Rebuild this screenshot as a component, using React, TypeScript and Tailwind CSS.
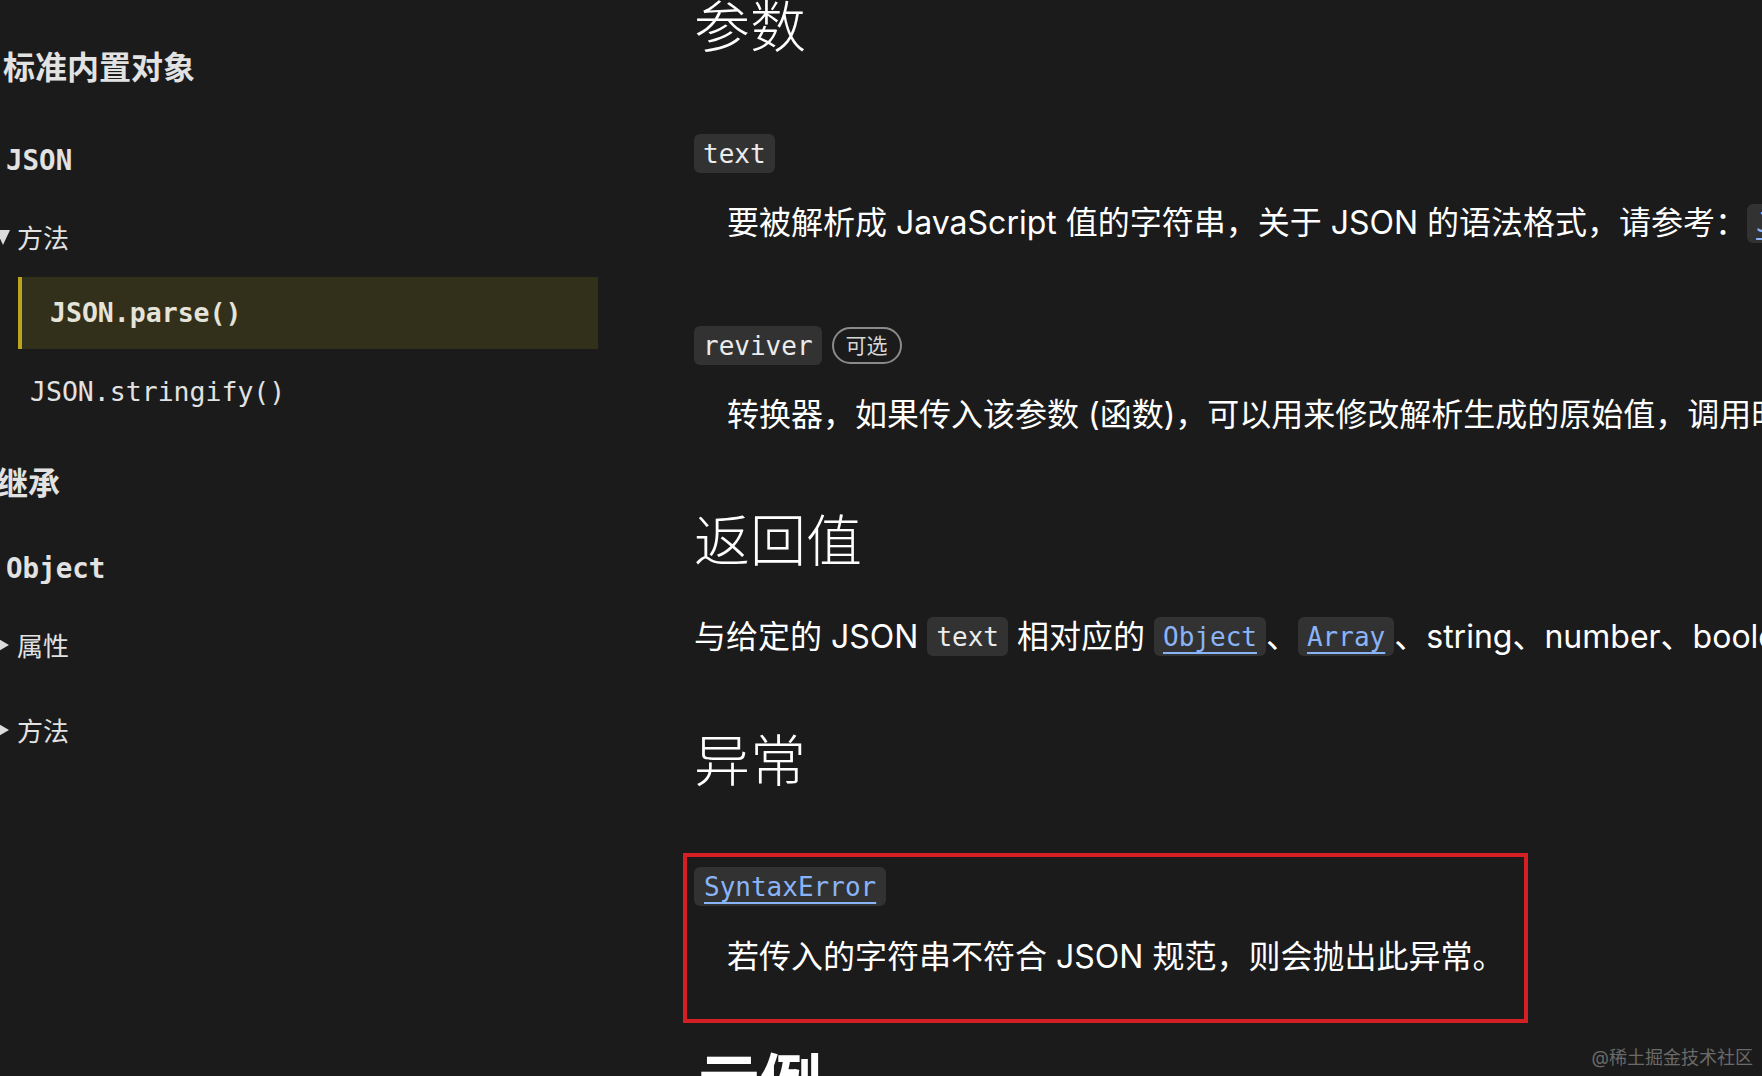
import React from "react";

const mono = { fontFamily: '"DejaVu Sans Mono", "Liberation Mono", monospace' };

function DownTri() {
  return (
    <svg width="14" height="15" viewBox="0 0 14 15" className="-ml-[4px] mr-[7px] shrink-0">
      <polygon points="0,0 14,0 7,15" fill="#dcdcdc" />
    </svg>
  );
}
function RightTri() {
  return (
    <svg width="12" height="14" viewBox="0 0 12 14" className="-ml-[3px] mr-[8px] shrink-0">
      <polygon points="0,0 12,7 0,14" fill="#dcdcdc" />
    </svg>
  );
}

function Code({ children, link = false, className = "" }: { children: React.ReactNode; link?: boolean; className?: string }) {
  return (
    <span
      className={
        "inline-flex items-center h-[39px] px-[9px] rounded-[6px] bg-[#323232] text-[26px] leading-none align-middle shrink-0 " +
        (link ? "text-[#8ab4f8] underline decoration-[2px] underline-offset-[6px] " : "text-[#ececec] ") +
        className
      }
      style={mono}
    >
      {children}
    </span>
  );
}

export default function App() {
  return (
    <div
      className="relative w-[1762px] h-[1076px] overflow-hidden bg-[#1b1b1b] flex"
      style={{ fontFamily: '"Inter", "Noto Sans CJK SC", sans-serif' }}
    >
      {/* Sidebar */}
      <div
        className="w-[694px] shrink-0 flex flex-col pt-[40px] text-[#e2e2e2]"
        style={{ fontFamily: '"Noto Sans CJK SC", sans-serif' }}
      >
        <div className="shrink-0 h-[50px] flex items-center pl-[3px] text-[32px] font-bold leading-none">标准内置对象</div>
        <div className="shrink-0 mt-[46px] h-[50px] flex items-center pl-[6px] text-[27.5px] font-bold leading-none" style={mono}>
          JSON
        </div>
        <div className="shrink-0 mt-[26px] h-[50px] flex items-center text-[26px] leading-none">
          <DownTri />
          方法
        </div>
        <div className="shrink-0 mt-[15px] ml-[18px] w-[580px] h-[72px] flex items-center pl-[28px] bg-[#32301b] border-l-[4px] border-[#bba51c]">
          <span className="text-[26.5px] font-bold leading-none text-[#e6e4d8]" style={mono}>
            JSON.parse()
          </span>
        </div>
        <div className="shrink-0 mt-[18px] h-[50px] flex items-center pl-[30px] text-[26.5px] leading-none" style={mono}>
          JSON.stringify()
        </div>
        <div className="shrink-0 mt-[39px] h-[50px] flex items-center -ml-[4px] text-[32px] font-bold leading-none">继承</div>
        <div className="shrink-0 mt-[38px] h-[50px] flex items-center pl-[6px] text-[27.5px] font-bold leading-none" style={mono}>
          Object
        </div>
        <div className="shrink-0 mt-[26px] h-[50px] flex items-center text-[26px] leading-none">
          <RightTri />
          属性
        </div>
        <div className="shrink-0 mt-[35px] h-[50px] flex items-center text-[26px] leading-none">
          <RightTri />
          方法
        </div>
      </div>

      {/* Content */}
      <div className="flex-1 min-w-0 flex flex-col text-white whitespace-nowrap">
        <div className="shrink-0 -mt-[1px] h-[56px] flex items-center text-[56px] font-light leading-none">参数</div>

        <div className="shrink-0 mt-[79px] flex">
          <Code>text</Code>
        </div>
        <div className="shrink-0 mt-[30px] h-[40px] flex items-center pl-[33px] text-[32px] leading-none">
          <span>要被解析成 JavaScript 值的字符串，关于 JSON 的语法格式，请参考：</span>
          <Code link>JSON</Code>
        </div>

        <div className="shrink-0 mt-[83px] flex items-center gap-[10px]">
          <Code>reviver</Code>
          <span className="h-[37px] px-[12px] flex items-center rounded-full border-[2px] border-[#8a8a8a] text-[21px] leading-none text-[#d6d6d6]">
            可选
          </span>
        </div>
        <div className="shrink-0 mt-[30px] h-[40px] flex items-center pl-[33px] text-[32px] leading-none">
          转换器，如果传入该参数 (函数)，可以用来修改解析生成的原始值，调用时机在 parse 函数返回之前。
        </div>

        <div className="shrink-0 mt-[78px] h-[56px] flex items-center text-[56px] font-light leading-none">返回值</div>

        <div className="shrink-0 mt-[48px] h-[39px] flex items-center text-[32px] leading-none">
          <span>与给定的 JSON&nbsp;</span>
          <Code>text</Code>
          <span>&nbsp;相对应的&nbsp;</span>
          <Code link>Object</Code>
          <span>、</span>
          <Code link>Array</Code>
          <span>、string、number、boolean 或 null 值。</span>
        </div>

        <div className="shrink-0 mt-[77px] h-[56px] flex items-center text-[56px] font-light leading-none">异常</div>

        <div className="shrink-0 mt-[64px] -ml-[11px] w-[845px] h-[170px] border-[4px] border-[#d41f24] pt-[10px] pl-[7px] flex flex-col">
          <div className="flex">
            <Code link className="px-[10px]">SyntaxError</Code>
          </div>
          <div className="mt-[31px] h-[40px] flex items-center pl-[33px] text-[32px] leading-none">
            若传入的字符串不符合 JSON 规范，则会抛出此异常。
          </div>
        </div>

        <div className="shrink-0 mt-[30px] h-[62px] flex items-center pl-[4px] text-[62px] font-semibold leading-none">示例</div>
      </div>

      <div className="absolute right-[9px] bottom-[9px] text-[18px] leading-none text-[#6a6a6a]">@稀土掘金技术社区</div>
    </div>
  );
}
